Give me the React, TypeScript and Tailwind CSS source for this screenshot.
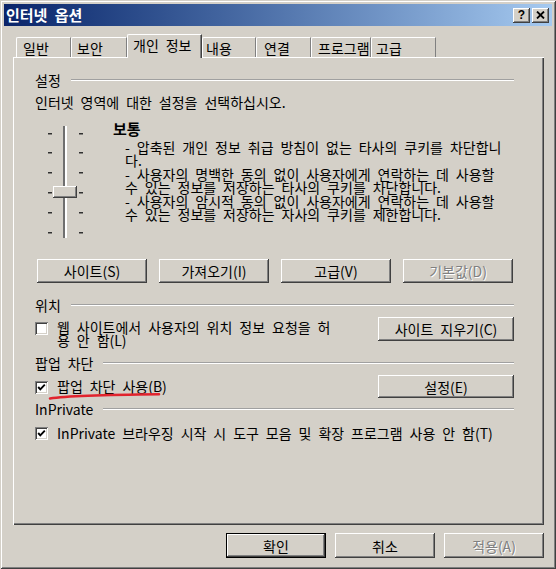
import React from "react";

const FONT = "[font-family:'Noto_Sans_CJK_KR','Noto_Sans',sans-serif]";
const RAISED =
  "bg-[#d4d0c8] shadow-[inset_-1px_-1px_#404040,inset_1px_1px_#ffffff,inset_-2px_-2px_#808080,inset_2px_2px_#d4d0c8]";
const SUNKEN =
  "bg-white shadow-[inset_1px_1px_#808080,inset_-1px_-1px_#ffffff,inset_2px_2px_#404040,inset_-2px_-2px_#d4d0c8]";

function Btn({
  label,
  w,
  h = 24,
  disabled = false,
  isDefault = false,
}: {
  label: string;
  w: string;
  h?: number;
  disabled?: boolean;
  isDefault?: boolean;
}) {
  const text = disabled ? "text-[#808080] [text-shadow:1px_1px_0_#ffffff]" : "text-black";
  if (isDefault) {
    return (
      <div className={`${w} h-[25px] border border-black flex`}>
        <div className={`flex-1 ${RAISED} flex items-center justify-center ${text}`}>{label}</div>
      </div>
    );
  }
  return (
    <div
      className={`${w} ${h === 25 ? "h-[25px]" : h === 23 ? "h-[23px]" : "h-[24px]"} ${RAISED} flex items-center justify-center ${text}`}
    >
      {label}
    </div>
  );
}

function Group({ label, className = "" }: { label: string; className?: string }) {
  return (
    <div className={`flex items-center h-[16px] ${className}`}>
      <span className="whitespace-nowrap">{label}</span>
      <div className="flex-1 ml-[10px] h-[2px] border-t border-t-[#a0a0a0] border-b border-b-white" />
    </div>
  );
}

function Check({ checked }: { checked: boolean }) {
  return (
    <div className={`w-[13px] h-[13px] shrink-0 ${SUNKEN} flex items-center justify-center`}>
      {checked && (
        <svg width="13" height="13" viewBox="0 0 13 13">
          <path d="M3.2 6 L5.3 8.3 L9.8 3.6" fill="none" stroke="#000" strokeWidth="1.9" />
        </svg>
      )}
    </div>
  );
}

function Slider() {
  const ticks = [7, 26, 46, 66, 86, 106];
  return (
    <svg width="50" height="114" viewBox="0 0 50 114" className="mt-[5px] shrink-0">
      <rect x="28" y="0" width="2" height="112" fill="#6f6f6f" />
      <rect x="30" y="0" width="2" height="112" fill="#ffffff" />
      {ticks.map((t) => (
        <g key={t}>
          <rect x="13" y={t} width="4" height="1.5" fill="#303030" />
          <rect x="44" y={t} width="4" height="1.5" fill="#303030" />
        </g>
      ))}
      <rect x="18" y="60" width="24" height="12" fill="#404040" />
      <rect x="18" y="60" width="23" height="11" fill="#ffffff" />
      <rect x="19" y="61" width="22" height="10" fill="#808080" />
      <rect x="19" y="61" width="21" height="9" fill="#d4d0c8" />
    </svg>
  );
}

const TABS = [
  { label: "일반", w: "w-[55px]", pl: "pl-[6px]" },
  { label: "보안", w: "w-[56px]", pl: "pl-[5px]" },
  { label: "개인 정보", w: "w-[75px]", pl: "pl-[5px]", active: true },
  { label: "내용", w: "w-[54px]", pl: "pl-[3px]" },
  { label: "연결", w: "w-[55px]", pl: "pl-[7px]" },
  { label: "프로그램", w: "w-[60px]", pl: "pl-[6px]" },
  { label: "고급", w: "w-[65px]", pl: "pl-[4px]" },
];

const DESC = [
  "- 압축된 개인 정보 취급 방침이 없는 타사의 쿠키를 차단합니",
  "다.",
  "- 사용자의 명백한 동의 없이 사용자에게 연락하는 데 사용할",
  "수 있는 정보를 저장하는 타사의 쿠키를 차단합니다.",
  "- 사용자의 암시적 동의 없이 사용자에게 연락하는 데 사용할",
  "수 있는 정보를 저장하는 자사의 쿠키를 제한합니다.",
];

export default function App() {
  return (
    <div
      className={`w-[556px] h-[569px] bg-[#d4d0c8] p-[4px] flex flex-col text-[14px] leading-[16px] text-black [word-spacing:3.8px] ${FONT} shadow-[inset_1px_1px_#d4d0c8,inset_-1px_-1px_#404040,inset_2px_2px_#ffffff,inset_-2px_-2px_#808080]`}
    >
      {/* title bar */}
      <div className="h-[22px] bg-linear-to-r from-[#0a246a] to-[#a6caf0] flex items-center justify-between pl-[2px] pr-[3px]">
        <span className="text-white font-bold text-[15px] [word-spacing:4px]">인터넷 옵션</span>
        <div className="flex gap-[2px]">
          <div className={`w-[17px] h-[15px] ${RAISED} flex items-center justify-center font-bold text-[12px] leading-none [font-family:'Liberation_Sans',sans-serif]`}>
            ?
          </div>
          <div className={`w-[17px] h-[15px] ${RAISED} flex items-center justify-center`}>
            <svg width="9" height="8" viewBox="0 0 9 8">
              <path d="M1 0.5 L8 7.5 M8 0.5 L1 7.5" stroke="#000" strokeWidth="1.8" />
            </svg>
          </div>
        </div>
      </div>

      {/* tabs */}
      <div className="mt-[8px] h-[23px] ml-[12px] flex items-end">
        {TABS.map((t) =>
          t.active ? (
            <div
              key={t.label}
              className={`relative z-10 ${t.w} ${t.pl} h-[24px] -mb-[1px] pt-[2px] bg-[#d4d0c8] border-t border-l border-white border-r border-r-[#404040] shadow-[inset_-1px_0_#808080] rounded-tl-[2px] whitespace-nowrap`}
            >
              {t.label}
            </div>
          ) : (
            <div
              key={t.label}
              className={`${t.w} ${t.pl} h-[20px] pt-[2px] border-t border-l border-white border-r border-r-[#808080] rounded-tl-[2px] whitespace-nowrap`}
            >
              {t.label}
            </div>
          )
        )}
      </div>

      {/* panel */}
      <div className="ml-[9px] w-[531px] h-[468px] pl-[22px] pr-[30px] pt-[15px] flex flex-col shadow-[inset_1px_1px_#ffffff,inset_-1px_-1px_#404040,inset_-2px_-2px_#808080]">
        <Group label="설정" />
        <div className="mt-[6px] whitespace-nowrap">인터넷 영역에 대한 설정을 선택하십시오.</div>

        <div className="mt-[11px] flex">
          <Slider />
          <div className="ml-[28px] flex flex-col">
            <div className="font-bold text-[15px]">보통</div>
            <div className="mt-[4px] pl-[12px] leading-[13.4px]">
              {DESC.map((l, i) => (
                <div key={i} className="whitespace-nowrap">
                  {l}
                </div>
              ))}
            </div>
          </div>
        </div>

        <div className="mt-[19px] ml-[2px] flex gap-[12px]">
          <Btn label="사이트(S)" w="w-[110px]" />
          <Btn label="가져오기(I)" w="w-[110px]" />
          <Btn label="고급(V)" w="w-[110px]" />
          <Btn label="기본값(D)" w="w-[110px]" disabled />
        </div>

        <Group label="위치" className="mt-[14px]" />
        <div className="mt-[4px] flex justify-between items-start">
          <div className="flex items-start">
            <div className="mt-[5px]">
              <Check checked={false} />
            </div>
            <div className="ml-[9px] mt-[4px] leading-[13px]">
              <div className="whitespace-nowrap">웹 사이트에서 사용자의 위치 정보 요청을 허</div>
              <div className="whitespace-nowrap">용 안 함(L)</div>
            </div>
          </div>
          <Btn label="사이트 지우기(C)" w="w-[136px]" />
        </div>

        <Group label="팝업 차단" className="mt-[8px]" />
        <div className="relative mt-[4px] flex justify-between items-start">
          <div className="flex items-start">
            <div className="mt-[6px]">
              <Check checked />
            </div>
            <div className="ml-[9px] mt-[3px] whitespace-nowrap">팝업 차단 사용(B)</div>
          </div>
          <Btn label="설정(E)" w="w-[136px]" h={23} />
          <svg width="116" height="9" viewBox="0 0 116 9" className="absolute left-[13px] top-[17px]">
            <path d="M2 6.5 C 22 3.4, 60 2.8, 111 2.3" fill="none" stroke="#e1232d" strokeWidth="2.6" strokeLinecap="round" />
          </svg>
        </div>

        <Group label="InPrivate" className="mt-[3px]" />
        <div className="mt-[8px] h-[16px] flex items-center">
          <Check checked />
          <div className="ml-[9px] whitespace-nowrap">
            InPrivate 브라우징 시작 시 도구 모음 및 확장 프로그램 사용 안 함(T)
          </div>
        </div>
      </div>

      {/* bottom buttons */}
      <div className="mt-[8px] mr-[8px] flex justify-end gap-[9px]">
        <Btn label="확인" w="w-[100px]" isDefault />
        <Btn label="취소" w="w-[100px]" h={25} />
        <Btn label="적용(A)" w="w-[100px]" h={25} disabled />
      </div>
    </div>
  );
}
